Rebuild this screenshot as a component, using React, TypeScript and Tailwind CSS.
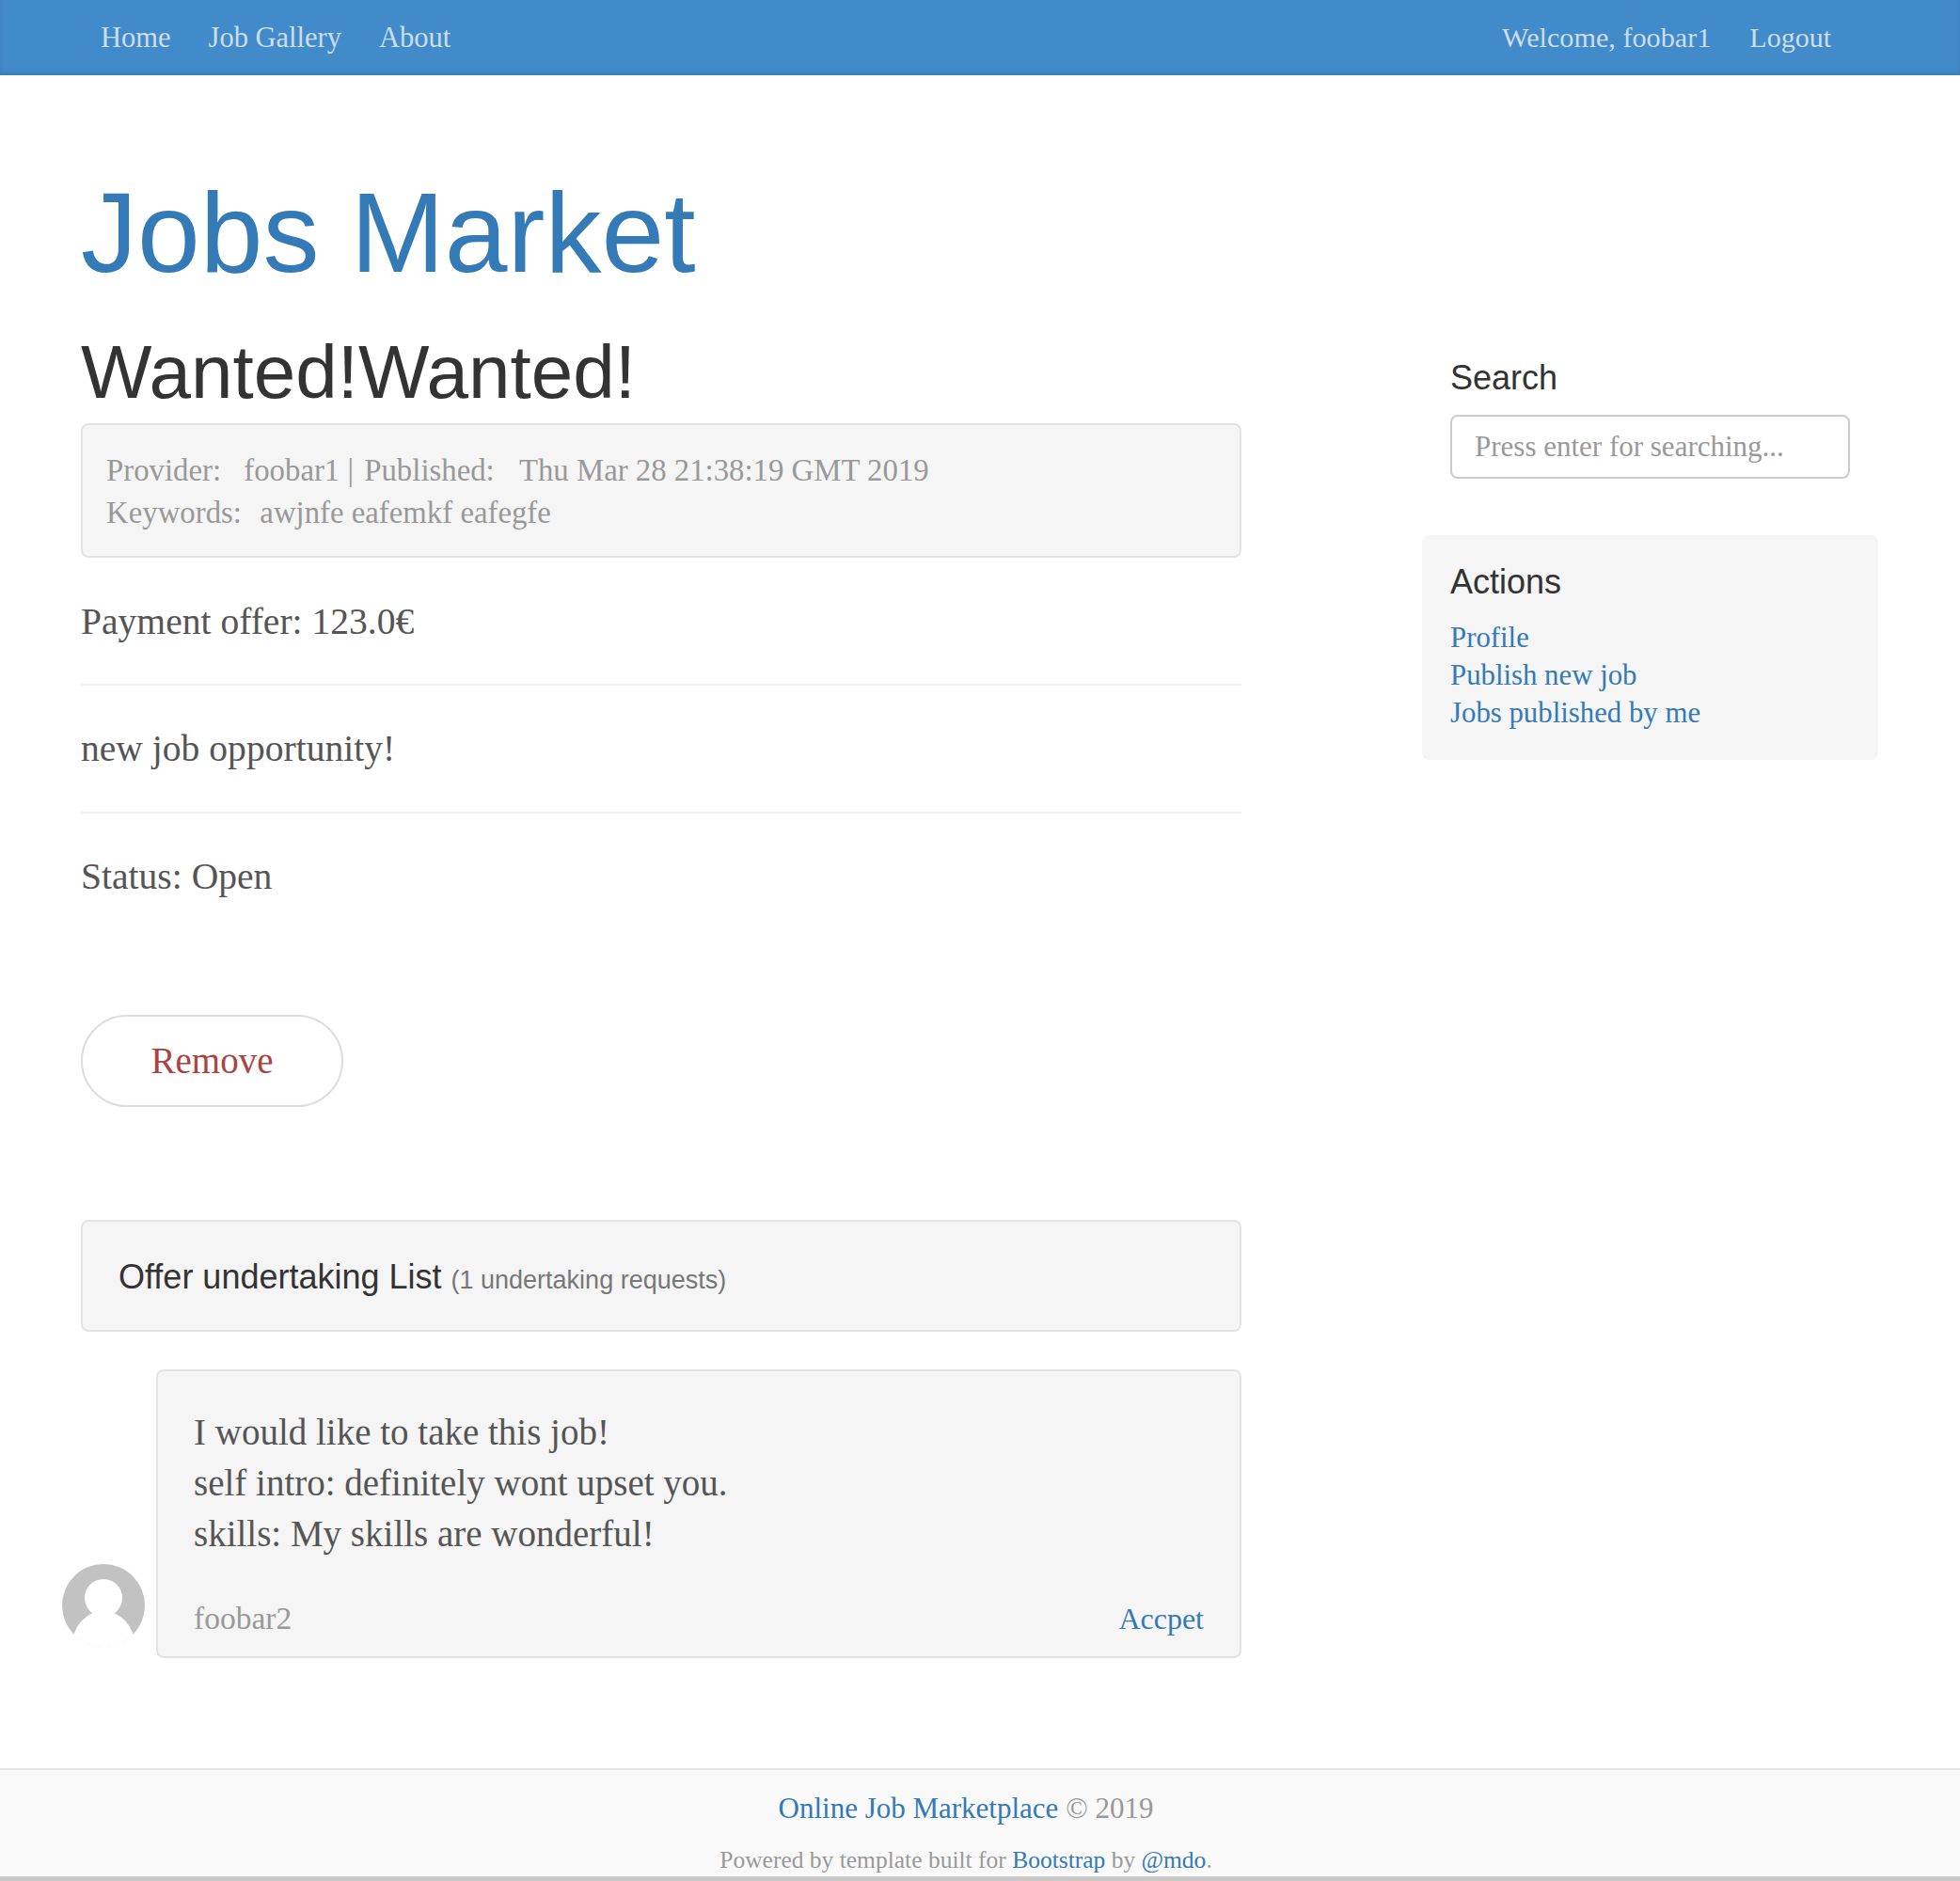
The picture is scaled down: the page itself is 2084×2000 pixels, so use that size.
import React from "react";

const serif = "font-['Liberation_Serif',serif]";
const sans = "font-['Liberation_Sans',sans-serif]";

function Avatar() {
  return (
    <svg viewBox="0 0 88 88" className="w-[88px] h-[88px] shrink-0 block">
      <defs>
        <clipPath id="a"><circle cx="44" cy="44" r="44" /></clipPath>
      </defs>
      <circle cx="44" cy="44" r="44" fill="#c2c2c2" />
      <g clipPath="url(#a)" fill="#ffffff">
        <circle cx="44" cy="36" r="20" />
        <ellipse cx="44" cy="86" rx="33" ry="36" />
        <rect x="0" y="74" width="88" height="14" />
      </g>
    </svg>
  );
}

export default function App() {
  return (
    <div className={`${serif} relative h-[2000px] bg-white text-[#555] overflow-hidden flex flex-col`}>
      <nav className="h-[80px] bg-[#428bca] shadow-[inset_0_-3px_5px_rgba(0,0,0,0.1)] flex items-center pl-[107px] pr-[137px] pb-[1px] text-[30.5px] leading-[40px] text-[#cdddeb] shrink-0">
        <a className="mr-[40px]">Home</a>
        <a className="mr-[40px]">Job Gallery</a>
        <a>About</a>
        <a className="ml-auto mr-[41px] text-[30.2px]">Welcome, foobar1</a>
        <a className="text-[30px]">Logout</a>
      </nav>

      <div className="flex-1 flex pl-[86px]">
        <main className="w-[1234px] shrink-0">
          <h1 className={`${sans} text-[120px] leading-[132px] text-[#337ab7] mt-[101px]`}>Jobs Market</h1>
          <h2 className={`${sans} text-[80px] leading-[88px] text-[#333] mt-[39px]`}>Wanted!Wanted!</h2>
          <div className="mt-[10px] h-[143px] border-2 border-[#e3e3e3] rounded-[8px] bg-[#f5f5f5] px-[25px] pt-[26px] text-[32.8px] leading-[45px] text-[#999]">
            <div>
              Provider:&nbsp;<span className="ml-[16px]">foobar1</span> | <span className="ml-[3px]">Published:</span>&nbsp;<span className="ml-[18px]">Thu Mar 28 21:38:19 GMT 2019</span>
            </div>
            <div>Keywords:&nbsp; <span className="ml-[3px]">awjnfe eafemkf eafegfe</span></div>
          </div>
          <p className="text-[39.6px] leading-[50px] mt-[43px]">Payment offer: 123.0€</p>
          <hr className="border-0 border-t-2 border-[#eee] mt-[41px]" />
          <p className="text-[39.6px] leading-[50px] mt-[42px]">new job opportunity!</p>
          <hr className="border-0 border-t-2 border-[#eee] mt-[42px]" />
          <p className="text-[39.6px] leading-[50px] mt-[42px]">Status: Open</p>
          <button className="block w-[279px] h-[98px] mt-[122px] pt-[1px] rounded-full border-2 border-[#ddd] text-[#a94442] text-[39px]">Remove</button>
          <div className={`${sans} mt-[120px] h-[119px] border-2 border-[#e3e3e3] rounded-[8px] bg-[#f5f5f5] pl-[38px] flex items-baseline pt-[32px] text-[36px] text-[#333]`}>
            Offer undertaking List
            <span className="text-[27px] text-[#777] ml-[10px]">(1 undertaking requests)</span>
          </div>
          <div className="relative mt-[40px] ml-[80px] h-[307px] border-2 border-[#e3e3e3] rounded-[8px] bg-[#f5f5f5] px-[38px] pt-[38px] flex flex-col">
            <div className="text-[39px] leading-[54px]">
              <div>I would like to take this job!</div>
              <div>self intro: definitely wont upset you.</div>
              <div>skills: My skills are wonderful!</div>
            </div>
            <div className="mt-[40px] flex justify-between items-baseline leading-[45px]">
              <span className="text-[#999] text-[33.5px]">foobar2</span>
              <a className="text-[#337ab7] text-[32px]">Accpet</a>
            </div>
            <div className="absolute left-[-102px] top-[205px]"><Avatar /></div>
          </div>
        </main>

        <aside className="ml-[192px] w-[485px] shrink-0 pt-[301px]">
          <div className="px-[30px]">
            <h4 className={`${sans} text-[36px] leading-[40px] text-[#333] mt-[1px]`}>Search</h4>
            <input
              placeholder="Press enter for searching..."
              className="mt-[19px] block w-[425px] h-[68px] border-2 border-[#ccc] rounded-[8px] bg-white px-[24px] text-[31px] placeholder:text-[#999] outline-none"
            />
          </div>
          <div className="mt-[60px] h-[239px] rounded-[8px] bg-[#f5f5f5] px-[30px] pt-[30px]">
            <h4 className={`${sans} text-[36px] leading-[40px] text-[#333]`}>Actions</h4>
            <div className="mt-[19px] text-[30.8px] leading-[40px] text-[#337ab7]">
              <div>Profile</div>
              <div>Publish new job</div>
              <div>Jobs published by me</div>
            </div>
          </div>
        </aside>
      </div>

      <footer className="relative h-[120px] shrink-0 bg-[#f9f9f9] border-t-2 border-[#e5e5e5] text-center text-[#999] pt-[21px] pr-[30px]">
        <p className="text-[31px] leading-[40px]"><a className="text-[#337ab7]">Online Job Marketplace</a> © 2019</p>
        <p className="text-[25.5px] leading-[36px] mt-[17px]">Powered by template built for <a className="text-[#337ab7]">Bootstrap</a> by <a className="text-[#337ab7]">@mdo</a>.</p>
        <div className="absolute left-0 right-0 bottom-0 h-[5px] bg-[#c8c8c8]" />
      </footer>
    </div>
  );
}
